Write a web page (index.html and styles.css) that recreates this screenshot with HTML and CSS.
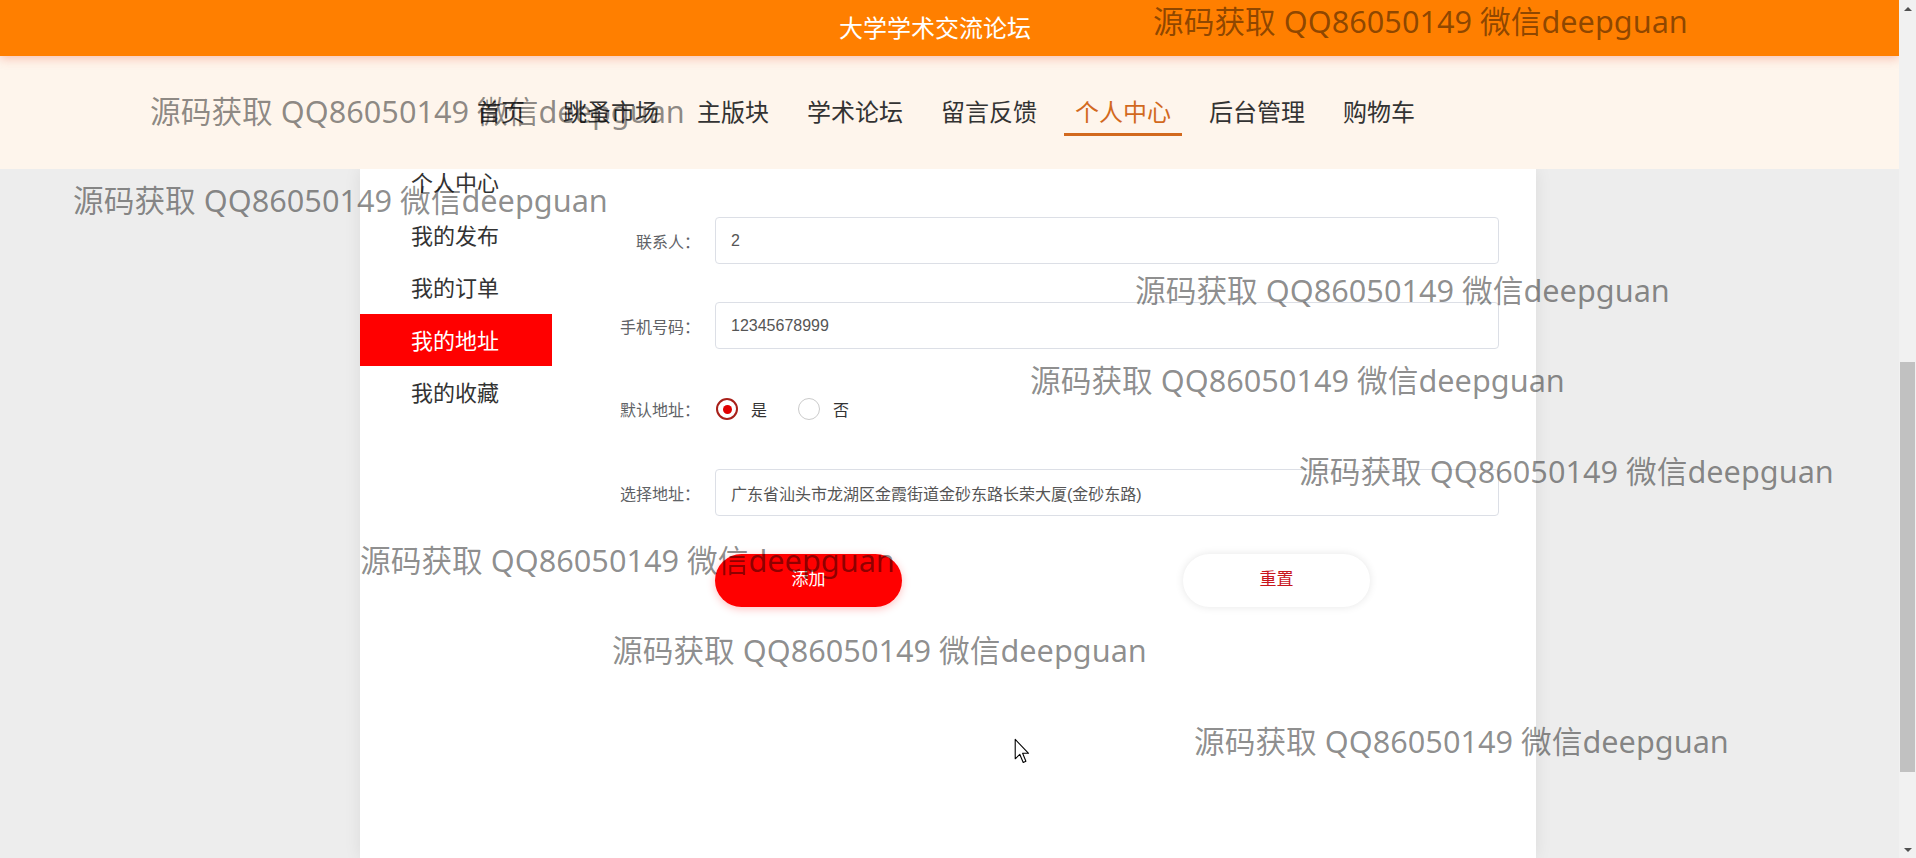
FILE: index.html
```html
<!DOCTYPE html>
<html lang="zh-CN">
<head>
<meta charset="utf-8">
<title>大学学术交流论坛</title>
<link rel="stylesheet" href="styles.css">
</head>
<body>
<div class="screen">
  <div class="viewport">
    <header class="topbar"><h1 class="site-title">大学学术交流论坛</h1></header>
    <nav class="mainnav">
      <a class="nav-item">首页</a>
      <a class="nav-item">跳蚤市场</a>
      <a class="nav-item">主版块</a>
      <a class="nav-item">学术论坛</a>
      <a class="nav-item">留言反馈</a>
      <a class="nav-item active">个人中心</a>
      <a class="nav-item">后台管理</a>
      <a class="nav-item">购物车</a>
    </nav>
    <main class="content">
      <div class="panel">
        <aside class="sidebar">
          <div class="side-item">个人中心</div>
          <div class="side-item">我的发布</div>
          <div class="side-item">我的订单</div>
          <div class="side-item active">我的地址</div>
          <div class="side-item">我的收藏</div>
        </aside>
        <form class="addr-form">
          <div class="form-row">
            <label class="form-label">联系人：</label>
            <input class="form-input" type="text" value="2">
          </div>
          <div class="form-row">
            <label class="form-label">手机号码：</label>
            <input class="form-input" type="text" value="12345678999">
          </div>
          <div class="form-row radio-row">
            <label class="form-label">默认地址：</label>
            <div class="radio-group">
              <span class="radio checked"></span><span class="radio-text">是</span>
              <span class="radio"></span><span class="radio-text">否</span>
            </div>
          </div>
          <div class="form-row">
            <label class="form-label">选择地址：</label>
            <input class="form-input" type="text" value="广东省汕头市龙湖区金霞街道金砂东路长荣大厦(金砂东路)">
          </div>
          <div class="btn-row">
            <button class="btn btn-primary" type="button">添加</button>
            <button class="btn btn-plain" type="button">重置</button>
          </div>
        </form>
      </div>
    </main>
    <div class="watermarks">
      <span class="wm wm1">源码获取 QQ86050149 微信deepguan</span>
      <span class="wm wm2">源码获取 QQ86050149 微信deepguan</span>
      <span class="wm wm3">源码获取 QQ86050149 微信deepguan</span>
      <span class="wm wm4">源码获取 QQ86050149 微信deepguan</span>
      <span class="wm wm5">源码获取 QQ86050149 微信deepguan</span>
      <span class="wm wm6">源码获取 QQ86050149 微信deepguan</span>
      <span class="wm wm7">源码获取 QQ86050149 微信deepguan</span>
      <span class="wm wm8">源码获取 QQ86050149 微信deepguan</span>
      <span class="wm wm9">源码获取 QQ86050149 微信deepguan</span>
    </div>
    <svg class="cursor" width="17" height="27" viewBox="0 0 14 22">
      <path d="M1 1 L1 17 L4.8 13.4 L7.6 20 L9.8 19 L7.1 12.5 L12 12.5 Z" fill="#fff" stroke="#000" stroke-width="0.9" stroke-linejoin="round"/>
    </svg>
  </div>
  <div class="scrollbar">
    <div class="sb-btn"><span class="arrow-up"></span></div>
    <div class="sb-thumb"></div>
    <div class="sb-spacer"></div>
    <div class="sb-btn"><span class="arrow-down"></span></div>
  </div>
</div>
</body>
</html>
```

FILE: styles.css
```css
* { box-sizing: border-box; }
html, body { margin: 0; height: 100%; }
body {
  font-family: "Noto Sans", "Noto Sans CJK SC", sans-serif;
  background: #ededed;
  overflow: hidden;
}
.screen { display: flex; width: 1916px; height: 858px; }
.viewport {
  position: relative;
  flex: 1;
  display: flex;
  flex-direction: column;
  overflow: hidden;
}

/* header */
.topbar {
  height: 56px;
  flex-shrink: 0;
  background: #ff7f00;
  display: flex;
  align-items: center;
  justify-content: center;
  padding-right: 29px;
  position: relative;
  z-index: 2;
  box-shadow: 0 2px 10px rgba(235, 80, 50, 0.35);
}
.site-title {
  margin: 0;
  font-size: 24px;
  font-weight: normal;
  color: #fff;
  line-height: 30px;
}

/* nav */
.mainnav {
  height: 113px;
  flex-shrink: 0;
  background: #fef5ec;
  display: flex;
  justify-content: center;
  align-items: center;
  gap: 16px;
  padding-right: 7px;
  position: relative;
  z-index: 1;
}
.nav-item {
  padding: 4px 11px 3px;
  line-height: 36px;
  font-size: 24px;
  color: #333;
  border-bottom: 3px solid transparent;
  cursor: pointer;
}
.nav-item.active { color: #d2691e; border-bottom-color: #d2691e; }

/* content */
.content { flex: 1; overflow: hidden; background: #ededed; padding-right: 3px; }
.panel {
  width: 1176px;
  height: 100%;
  margin: 0 auto;
  background: #fff;
  display: flex;
  box-shadow: 0 0 16px rgba(0, 0, 0, 0.08);
}
.sidebar { width: 192px; flex-shrink: 0; margin-top: -13px; }
.side-item {
  height: 52.5px;
  line-height: 52.5px;
  padding-left: 51px;
  font-size: 22px;
  color: #333;
}
.side-item.active { background: #ff0000; color: #fff; }

.addr-form { margin: 48px 0 0 28px; width: 919px; }
.form-row {
  display: flex;
  align-items: center;
  gap: 15px;
  margin-bottom: 38px;
}
.form-label {
  width: 120px;
  text-align: right;
  font-size: 16px;
  color: #606266;
}
.form-input {
  width: 784px;
  height: 47px;
  border: 1px solid #dcdfe6;
  border-radius: 4px;
  padding: 0 15px;
  font-family: "Liberation Sans", "Noto Sans CJK SC", sans-serif;
  font-size: 16px;
  color: #555;
  outline: none;
  background: #fff;
}
.radio-row { height: 44px; }
.radio-group { display: flex; align-items: center; padding-left: 1px; }
.radio {
  width: 22px;
  height: 22px;
  border-radius: 50%;
  border: 1.5px solid #cbcbcb;
  display: flex;
  align-items: center;
  justify-content: center;
}
.radio.checked { border: 2px solid #a8201a; }
.radio.checked::after {
  content: "";
  width: 9px;
  height: 9px;
  border-radius: 50%;
  background: #e00000;
}
.radio-text { margin: 0 31px 0 13px; font-size: 16px; color: #333; }

.btn-row { display: flex; gap: 281px; padding-left: 135px; }
.btn {
  width: 187px;
  height: 53px;
  border: none;
  border-radius: 27px;
  padding: 0 0 4px;
  font-family: "Noto Sans", "Noto Sans CJK SC", sans-serif;
  font-size: 17px;
  line-height: 24px;
  cursor: pointer;
}
.btn-primary { background: #ff0000; color: #fff; box-shadow: 0 2px 8px rgba(255, 0, 0, 0.25); }
.btn-plain { background: #fff; color: #c8161d; box-shadow: 0 0 8px rgba(0, 0, 0, 0.1); }

/* watermark overlay */
.watermarks { position: absolute; inset: 0; pointer-events: none; z-index: 5; }
.wm {
  position: absolute;
  font-size: 30.7px;
  line-height: 40px;
  color: rgba(0, 0, 0, 0.45);
  white-space: nowrap;
}
.wm1 { left: 1153px; top: 1px; }
.wm2 { left: 150px; top: 91px; }
.wm3 { left: 73px; top: 180px; }
.wm4 { left: 1135px; top: 270px; }
.wm5 { left: 1030px; top: 360px; }
.wm6 { left: 1299px; top: 451px; }
.wm7 { left: 360px; top: 540px; }
.wm8 { left: 612px; top: 630px; }
.wm9 { left: 1194px; top: 721px; }

.cursor { position: absolute; left: 1014px; top: 738px; z-index: 6; }

/* scrollbar */
.scrollbar {
  width: 17px;
  flex-shrink: 0;
  background: #f1f1f1;
  display: flex;
  flex-direction: column;
}
.sb-btn { height: 17px; display: flex; align-items: center; justify-content: center; }
.arrow-up { border-left: 4px solid transparent; border-right: 4px solid transparent; border-bottom: 4px solid #505050; }
.arrow-down { border-left: 4px solid transparent; border-right: 4px solid transparent; border-top: 4px solid #505050; }
.sb-thumb { margin: 345px 1px 0; height: 410px; background: #c1c1c1; }
.sb-spacer { flex: 1; }
```
